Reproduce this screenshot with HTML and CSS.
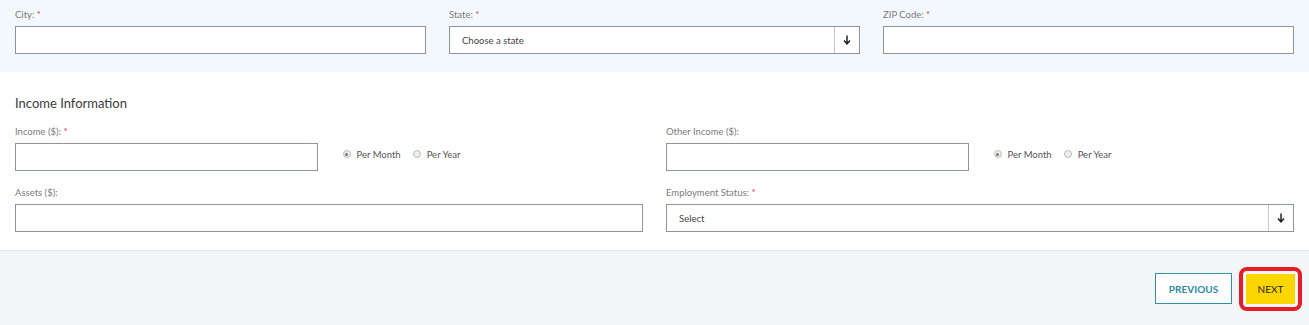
FILE: index.html
```html
<!DOCTYPE html>
<html lang="en">
<head>
<meta charset="utf-8">
<title>Application</title>
<link rel="stylesheet" href="styles.css">
</head>
<body>
<section class="address">
  <div class="grid3">
    <div class="field">
      <label class="lbl">City: <span class="req">*</span></label>
      <div class="input"></div>
    </div>
    <div class="field">
      <label class="lbl">State: <span class="req">*</span></label>
      <div class="input select">
        <span class="sel-text">Choose a state</span>
        <span class="sel-arrow"><svg width="8" height="10" viewBox="0 0 8 10"><path d="M4 0.5V8.5M1 5.5L4 8.8L7 5.5" fill="none" stroke="#222" stroke-width="1.5"/></svg></span>
      </div>
    </div>
    <div class="field">
      <label class="lbl">ZIP Code: <span class="req">*</span></label>
      <div class="input"></div>
    </div>
  </div>
</section>
<section class="income">
  <h2 class="heading">Income Information</h2>
  <div class="grid2">
    <div class="field">
      <label class="lbl">Income ($): <span class="req">*</span></label>
      <div class="pair">
        <div class="input"></div>
        <div class="radios">
          <span class="radio checked"></span><span class="rtext">Per Month</span>
          <span class="radio"></span><span class="rtext">Per Year</span>
        </div>
      </div>
    </div>
    <div class="field">
      <label class="lbl">Other Income ($):</label>
      <div class="pair">
        <div class="input"></div>
        <div class="radios">
          <span class="radio checked"></span><span class="rtext">Per Month</span>
          <span class="radio"></span><span class="rtext">Per Year</span>
        </div>
      </div>
    </div>
    <div class="field">
      <label class="lbl">Assets ($):</label>
      <div class="input"></div>
    </div>
    <div class="field">
      <label class="lbl">Employment Status: <span class="req">*</span></label>
      <div class="input select">
        <span class="sel-text">Select</span>
        <span class="sel-arrow"><svg width="8" height="10" viewBox="0 0 8 10"><path d="M4 0.5V8.5M1 5.5L4 8.8L7 5.5" fill="none" stroke="#222" stroke-width="1.5"/></svg></span>
      </div>
    </div>
  </div>
</section>
<footer class="footer">
  <button class="btn btn-prev">PREVIOUS</button>
  <span class="highlight"><button class="btn btn-next">NEXT</button></span>
</footer>
</body>
</html>
```
FILE: styles.css
```css
* { box-sizing: border-box; }
body {
  margin: 0;
  font-family: "Lato", "Open Sans", sans-serif;
  color: #444;
  background: #fff;
}
.address {
  background: #f2f8fb;
  padding: 9px 15px 18px;
  height: 72px;
}
.grid3 {
  display: grid;
  grid-template-columns: repeat(3, 1fr);
  column-gap: 23px;
}
.grid2 {
  display: grid;
  grid-template-columns: 1fr 1fr;
  column-gap: 23px;
  row-gap: 16px;
}
.field { display: flex; flex-direction: column; }
.lbl {
  font-size: 9.5px;
  line-height: 12px;
  color: #7a7a7a;
  margin-bottom: 5px;
}
.req { color: #d9434e; }
.input {
  height: 28px;
  border: 1px solid #8f9597;
  background: #fff;
}
.select {
  display: flex;
  align-items: stretch;
}
.sel-text {
  flex: 1;
  display: flex;
  align-items: center;
  padding-left: 12px;
  font-size: 9.5px;
  color: #444;
}
.sel-arrow {
  width: 25px;
  border-left: 1px solid #c8c8c8;
  display: flex;
  align-items: center;
  justify-content: center;
}
.income {
  padding: 23px 15px 18px;
  border-bottom: 1px solid #e2e6e8;
}
.heading {
  margin: 0 0 15px;
  font-size: 13px;
  line-height: 16px;
  font-weight: 400;
  color: #3a3a3a;
}
.pair {
  display: grid;
  grid-template-columns: 1fr 1fr;
  column-gap: 23px;
}
.radios {
  display: flex;
  align-items: center;
  font-size: 9.5px;
  color: #555;
  padding: 0 0 6px 2px;
}
.radio {
  width: 8px;
  height: 8px;
  border-radius: 50%;
  border: 1px solid #bbb;
  background: #eee;
  margin-right: 6px;
  position: relative;
}
.radio.checked::after {
  content: "";
  position: absolute;
  left: 1.5px;
  top: 1.5px;
  width: 3px;
  height: 3px;
  border-radius: 50%;
  background: #777;
}
.rtext { margin-right: 12px; }
.footer {
  background: #f4f5f6;
  height: 75px;
  display: flex;
  justify-content: flex-end;
  align-items: center;
  padding: 0 7px 0 0;
  gap: 7px;
}
.btn {
  font-family: "Lato", "Open Sans", sans-serif;
  font-size: 10px;
  cursor: pointer;
  border-radius: 0;
}
.btn-prev {
  width: 77px;
  height: 31px;
  background: #fff;
  border: 1px solid #2e93a8;
  color: #2e8aa0;
  font-weight: 700;
}
.highlight {
  display: inline-flex;
  padding: 3px;
  border: 4px solid #e41e26;
  border-radius: 8px;
}
.btn-next {
  width: 49px;
  height: 30px;
  border: none;
  background: #fcd600;
  color: #222;
}
```
